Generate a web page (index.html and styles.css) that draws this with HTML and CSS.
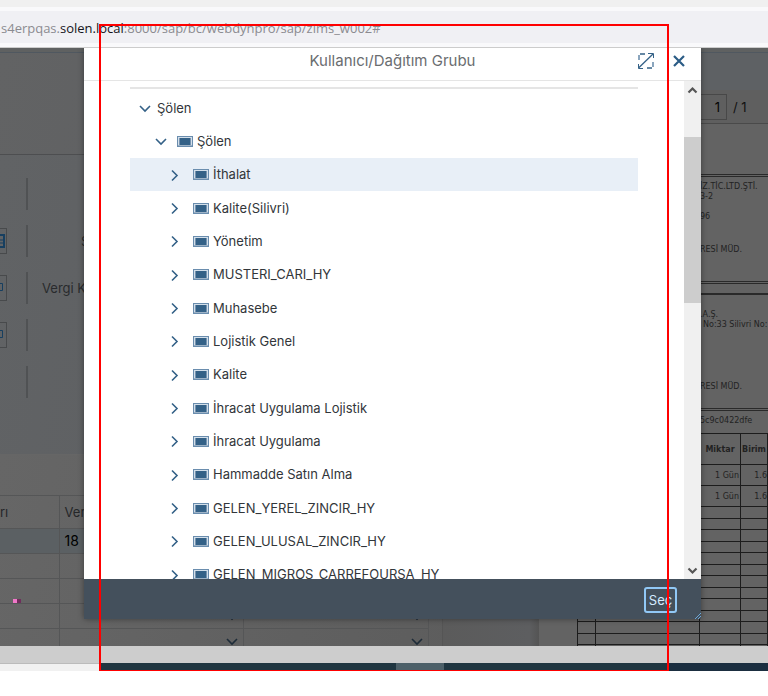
FILE: index.html
```html
<!DOCTYPE html>
<html lang="tr">
<head>
<meta charset="utf-8">
<title>Kullanıcı/Dağıtım Grubu</title>
<link rel="stylesheet" href="styles.css">
</head>
<body>
<svg class="sprite" aria-hidden="true">
  <symbol id="down" viewBox="0 0 14 14"><path d="M2 5l5 5 5-5" fill="none" stroke="currentColor" stroke-width="1.6"/></symbol>
  <symbol id="right" viewBox="0 0 14 14"><path d="M2 2.500l5 5-5 5" fill="none" stroke="currentColor" stroke-width="1.6"/></symbol>
  <symbol id="unit" viewBox="0 0 16 11"><path fill="#6a8dae" d="M0 0h16v11H0z"/><path fill="#d3dfea" d="M1 1h14v8H1z"/><path fill="#9db2c6" d="M1 9h14v1H1z"/><path fill="#7794b0" d="M2 2h12v7H2z"/><path fill="#346187" d="M3 2h10v7H3z"/></symbol>
</svg>
<div class="screen">
  <header class="browser">
    <div class="address">s4erpqas.<b>solen.local</b>:8000/sap/bc/webdynpro/sap/zims_w002#</div>
  </header>

  <main class="stage">
    <div class="backdrop">
      <section class="work">
        <div class="strip"></div>
        <div class="band"></div>
        <div class="form">
          <div class="field"><span class="stub"></span><i></i></div>
          <div class="field"><button class="stub boxed" aria-label="Takvim"><svg width="6" height="16"><path d="M0 2h4v12H0" fill="none" stroke="#173f60" stroke-width="2"/><path d="M0 7h3M0 10h3" stroke="#173f60"/></svg></button><i></i><span class="name">S</span></div>
          <div class="field"><button class="stub boxed" aria-label="Değer yardımı"><svg width="6" height="16"><path d="M0 3.500h2.500v7H0" fill="none" stroke="#173f60"/></svg></button><i></i><span class="name">Vergi K</span></div>
          <div class="field"><button class="stub boxed" aria-label="Değer yardımı"><svg width="6" height="16"><path d="M0 3.500h2.500v7H0" fill="none" stroke="#173f60"/></svg></button><i></i></div>
          <div class="field"><span class="stub"></span><i></i></div>
        </div>
        <div class="gridwrap">
          <table class="items">
            <colgroup><col class="c1"><col class="c2"><col class="c2"></colgroup>
            <tr class="head"><th>rı</th><th>Ver</th><th></th></tr>
            <tr class="picked"><td></td><td>18</td><td></td></tr>
            <tr><td></td><td></td><td></td></tr>
            <tr><td class="low"><span class="mark"></span></td><td></td><td></td></tr>
            <tr><td></td><td class="pick"><svg width="14" height="14"><use href="#down"/></svg></td><td class="pick"><svg width="14" height="14"><use href="#down"/></svg></td></tr>
            <tr><td></td><td class="pick"><svg width="14" height="14"><use href="#down"/></svg></td><td class="pick"><svg width="14" height="14"><use href="#down"/></svg></td></tr>
          </table>
        </div>
      </section>
      <div class="gutter"></div>
      <section class="preview">
        <div class="strip"></div>
        <div class="band"></div>
        <div class="pager"><input aria-label="Sayfa" value="1"><span>/ 1</span></div>
        <div class="paper">
          <div class="party first"><p>İZ.TİC.LTD.ŞTİ.</p><p>3-2</p><p class="apart">96</p><p class="office">RESİ MÜD.</p></div>
          <div class="party second"><p>.A.Ş.</p><p class="street">No:33 Silivri No:</p><p class="far">RESİ MÜD.</p></div>
          <div class="party third"><p>5c9c0422dfe</p></div>
          <table class="lines">
            <colgroup><col class="d1"><col class="d2"><col class="d3"><col class="d4"></colgroup>
            <thead><tr><th></th><th></th><th>Miktar</th><th>Birim</th></tr></thead>
            <tbody class="filled">
              <tr><td></td><td></td><td>1 Gün</td><td>1.6</td></tr>
              <tr><td></td><td></td><td>1 Gün</td><td>1.6</td></tr>
            </tbody>
            <tbody class="blank">
              <tr><td></td><td></td><td></td><td></td></tr>
              <tr><td></td><td></td><td></td><td></td></tr>
              <tr><td></td><td></td><td></td><td></td></tr>
              <tr><td></td><td></td><td></td><td></td></tr>
              <tr><td></td><td></td><td></td><td></td></tr>
              <tr><td></td><td></td><td></td><td></td></tr>
              <tr><td></td><td></td><td></td><td></td></tr>
              <tr><td></td><td></td><td></td><td></td></tr>
              <tr><td></td><td></td><td></td><td></td></tr>
              <tr><td></td><td></td><td></td><td></td></tr>
              <tr><td></td><td></td><td></td><td></td></tr>
              <tr><td></td><td></td><td></td><td></td></tr>
              <tr><td></td><td></td><td></td><td></td></tr>
            </tbody>
          </table>
        </div>
      </section>
    </div>

    <section class="dialog" role="dialog" aria-labelledby="dlg-title">
      <header class="dlg-head">
        <h1 id="dlg-title">Kullanıcı/Dağıtım Grubu</h1>
        <div class="tools">
          <button aria-label="Tam ekran"><svg width="18" height="18" viewBox="0 0 18 18" fill="none" stroke="#346187"><path d="M1.500 16L16 2" stroke-width="1.300"/><path d="M11 1.500h5.500V6M6 16.500H1.500V12"/><path d="M3 2h5M10 16h5" stroke-width="1.300"/><path d="M2 3v5M16 10v5" stroke="#8ba6be" stroke-width="2"/></svg></button>
          <button aria-label="Kapat"><svg width="12" height="12" viewBox="0 0 12 12"><path d="M1 1l10 10M11 1L1 11" stroke="#2b5c86" stroke-width="2.200"/></svg></button>
        </div>
      </header>
      <div class="dlg-body">
        <div class="content">
          <ul class="tree" role="tree">
            <li class="l0"><button aria-label="Daralt"><svg><use href="#down"/></svg></button><span>Şölen</span></li>
            <li class="l1"><button aria-label="Daralt"><svg><use href="#down"/></svg></button><svg class="unit"><use href="#unit"/></svg><span>Şölen</span></li>
            <li class="l2 selected"><button aria-label="Genişlet"><svg><use href="#right"/></svg></button><svg class="unit"><use href="#unit"/></svg><span>İthalat</span></li>
            <li class="l2"><button aria-label="Genişlet"><svg><use href="#right"/></svg></button><svg class="unit"><use href="#unit"/></svg><span>Kalite(Silivri)</span></li>
            <li class="l2"><button aria-label="Genişlet"><svg><use href="#right"/></svg></button><svg class="unit"><use href="#unit"/></svg><span>Yönetim</span></li>
            <li class="l2"><button aria-label="Genişlet"><svg><use href="#right"/></svg></button><svg class="unit"><use href="#unit"/></svg><span>MUSTERI_CARI_HY</span></li>
            <li class="l2"><button aria-label="Genişlet"><svg><use href="#right"/></svg></button><svg class="unit"><use href="#unit"/></svg><span>Muhasebe</span></li>
            <li class="l2"><button aria-label="Genişlet"><svg><use href="#right"/></svg></button><svg class="unit"><use href="#unit"/></svg><span>Lojistik Genel</span></li>
            <li class="l2"><button aria-label="Genişlet"><svg><use href="#right"/></svg></button><svg class="unit"><use href="#unit"/></svg><span>Kalite</span></li>
            <li class="l2"><button aria-label="Genişlet"><svg><use href="#right"/></svg></button><svg class="unit"><use href="#unit"/></svg><span>İhracat Uygulama Lojistik</span></li>
            <li class="l2"><button aria-label="Genişlet"><svg><use href="#right"/></svg></button><svg class="unit"><use href="#unit"/></svg><span>İhracat Uygulama</span></li>
            <li class="l2"><button aria-label="Genişlet"><svg><use href="#right"/></svg></button><svg class="unit"><use href="#unit"/></svg><span>Hammadde Satın Alma</span></li>
            <li class="l2"><button aria-label="Genişlet"><svg><use href="#right"/></svg></button><svg class="unit"><use href="#unit"/></svg><span>GELEN_YEREL_ZINCIR_HY</span></li>
            <li class="l2"><button aria-label="Genişlet"><svg><use href="#right"/></svg></button><svg class="unit"><use href="#unit"/></svg><span>GELEN_ULUSAL_ZINCIR_HY</span></li>
            <li class="l2"><button aria-label="Genişlet"><svg><use href="#right"/></svg></button><svg class="unit"><use href="#unit"/></svg><span>GELEN_MIGROS_CARREFOURSA_HY</span></li>
          </ul>
        </div>
        <div class="scrollbar">
          <button aria-label="Yukarı"><svg width="11" height="8"><path d="M1.500 6.500l4-4 4 4" fill="none" stroke="#555" stroke-width="2.200"/></svg></button>
          <div class="before"></div><div class="thumb"></div><div class="after"></div>
          <button aria-label="Aşağı"><svg width="11" height="8"><path d="M1.500 1.500l4 4 4-4" fill="none" stroke="#555" stroke-width="2.200"/></svg></button>
        </div>
      </div>
      <footer class="dlg-foot">
        <button class="choose">Seç</button>
        <svg class="grip" width="6" height="6"><path d="M0 6L6 0M3 6l3-3" stroke="#6ca6d6"/></svg>
      </footer>
    </section>
  </main>

  <div class="hscroll"></div>
  <div class="taskbar"><span class="light"></span><span class="dark"></span><span class="active"></span><span class="dark"></span><span class="navy"></span></div>
  <div class="frame"></div>
</div>
</body>
</html>
```
FILE: styles.css
```css
* { box-sizing: border-box; }
body { margin: 0; background: #fff; font: 13px/20px "Inter", "Liberation Sans", sans-serif; color: #32363a; }
button { padding: 0; border: 0; background: none; display: flex; align-items: center; justify-content: center; font: inherit; }
p, h1, ul { margin: 0; padding: 0; }
.sprite { display: none; }
.screen { position: relative; }
.frame { position: absolute; top: 24px; bottom: 0; left: 99px; right: 99px; border: 2px solid #f00; border-bottom-width: 1px; pointer-events: none; }

.browser { height: 48px; padding: 4px 0; background: #f9f9fb; border-top: 7px solid #f0f0f0; border-bottom: 1px solid #ccc; }
.address { height: 32px; padding: 2px 1px 0; background: #f0f0f4; font: 13px/30px "Open Sans", sans-serif; color: #8b8b90; white-space: nowrap; overflow: hidden; }
.address b { font-weight: 400; color: #15141a; }

.stage { position: relative; overflow: hidden; }
.backdrop { position: absolute; inset: 0; display: grid; grid-template-columns: 1fr 97px 229px; overflow: hidden; background: #646464; }
.strip { height: 5px; background: #5f6161; border-bottom: 1px solid #505860; }
.work { background: #646464; min-width: 0; }
.work .band { height: 102px; background: linear-gradient(100deg, #626364, #5c5d60); border-bottom: 1px solid #4d4e50; }
.form { height: 299px; padding-top: 23px; background: linear-gradient(100deg, #616365, #5b5d60); display: flex; flex-direction: column; gap: 15px; }
.field { height: 32px; display: flex; align-items: center; }
.stub { width: 7px; height: 26px; margin-right: 19px; flex: none; }
.boxed { border: 1px solid #484a4c; border-left: 0; justify-content: flex-start; }
.field i { width: 2px; height: 32px; background: #505254; }
.name { width: 60px; margin-left: 14px; color: #292b2d; white-space: nowrap; }
.field:nth-child(2) .name { padding-left: 39px; }
.gridwrap { padding: 40px 13px 0 0; border-top: 1px solid #666; background: linear-gradient(100deg, #666, #5c5c5c); height: 100%; }
.items { width: 100%; border-collapse: collapse; table-layout: fixed; }
.items .c1 { width: 59px; }
.items tr { height: 25px; }
.items .head { height: 33px; }
.items th, .items td { padding: 0 5px; border: 1px solid #555657; border-left: 0; text-align: left; font-weight: 400; color: #252729; overflow: hidden; line-height: 20px; }
.items th:first-child { padding-left: 0; }
.items .picked { background: #5b6063; }
.items .picked td { color: #000; font-size: 14px; }
.items .pick { text-align: right; color: #1d2b38; padding: 0 4px; }
.items svg { display: block; margin-left: auto; }
.items .low { vertical-align: bottom; }
.mark { display: block; width: 8px; height: 4px; margin-left: 8px; background: linear-gradient(90deg, #f078c8 50%, #702d5c 50%); }
.gutter { background: linear-gradient(90deg, #5b5b5b, #5d5e60 90%, #545454); border-left: 1px solid #555; }

.preview { background: #636363; overflow: hidden; }
.preview .band { height: 37px; background: #5e6164; }
.pager { height: 34px; padding-left: 161px; display: flex; align-items: center; gap: 6px; border-bottom: 1px solid #4a4a4a; background: #5f5f5f; color: #111; }
.pager input { width: 27px; height: 26px; padding: 0 6px 0 0; border: 1px solid #484848; background: #5f5f5f; font: inherit; color: #050505; text-align: right; }
.paper { padding-left: 38px; padding-top: 50px; color: #222; font: 8px/10px "DejaVu Sans", sans-serif; }
.party { padding-left: 123px; border-top: 3px double #2a2a2a; white-space: nowrap; }
.first { height: 110px; padding-top: 5px; border-bottom: 3px double #2a2a2a; }
.first .apart { margin-top: 10px; }
.first .office { margin-top: 23px; }
.second { height: 115px; margin-top: 9px; padding-top: 15px; border-top: 2px solid #2a2a2a; }
.second .street { padding-left: 3px; }
.second .far { margin-top: 52px; }
.third { height: 25px; padding-top: 5px; }
.lines { width: 100%; border-collapse: collapse; table-layout: fixed; }
.lines .d1 { width: 18px; }
.lines .d3 { width: 41px; }
.lines .d4 { width: 27px; }
.lines thead tr { height: 31px; }
.lines .filled tr { height: 21px; }
.lines .blank tr { height: 12px; }
.lines .blank tr:nth-child(even) { height: 11px; }
.lines th, .lines td { padding: 0 1px; border: 1px solid #1c1c1c; text-align: right; line-height: 9px; }
.lines th { padding: 0; text-align: center; }
.lines td:last-child { padding: 0; }

.dialog { position: relative; margin: 0 67px 27px 84px; background: #fff; box-shadow: 0 0 6px rgba(0, 0, 0, .4); }
.dlg-head { height: 33px; padding-bottom: 6px; display: flex; align-items: center; justify-content: center; border-bottom: 1px solid #e5e5e5; }
.dlg-head h1 { font-size: 15px; line-height: 20px; font-weight: 400; color: #6a6d70; }
.tools { position: absolute; right: 16px; top: 4px; height: 18px; display: flex; align-items: center; gap: 18px; }
.dlg-body { height: 498px; display: flex; overflow: hidden; }
.content { flex: 1; padding: 6px 46px 0; }
.tree { list-style: none; min-height: 504px; padding-top: 2px; border-top: 2px solid #e5e5e5; display: grid; grid-template-rows: repeat(15, 1fr); }
.tree li { display: flex; align-items: center; gap: 4px; color: #32363a; }
.tree button, .tree button svg { width: 14px; height: 14px; color: #346187; }
.tree .unit { width: 16px; height: 11px; margin-left: 5px; }
.tree svg { margin-top: 1px; }
.l0 { padding-left: 8px; }
.l0 span { padding-left: 1px; }
.l1 { padding-left: 24px; }
.l2 { padding-left: 40px; }
.selected { background: #e8eff7; }
.scrollbar { width: 17px; background: #f0f0f0; display: flex; flex-direction: column; }
.scrollbar button { height: 17px; }
.before { flex: 39; }
.thumb { flex: 166; background: #cdcdcd; }
.after { flex: 259; }
.dlg-foot { height: 40px; padding: 2px 24px 0 0; display: flex; align-items: center; justify-content: flex-end; background: #44505c; }
.choose { width: 33px; height: 26px; border: 2px solid #91c8f6; border-radius: 3px; color: #d5eaff; }
.grip { position: absolute; right: 0; bottom: 0; }

.hscroll { height: 17px; background: #cdcdcd; }
.taskbar { height: 8px; display: flex; }
.light { width: 100px; background: #f1f1f1; border-top: 1px solid #bbb; }
.dark { flex: 296; background: #203641; }
.active { width: 48px; background: #4d6069; }
.active + .dark { flex: 225; }
.navy { width: 99px; background: #1b2e40; }
```
